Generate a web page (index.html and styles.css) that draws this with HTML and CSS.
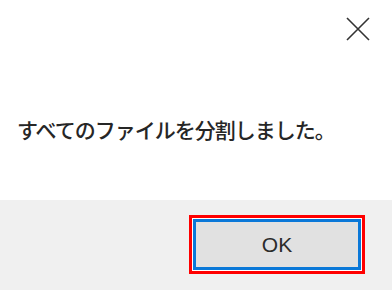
FILE: index.html
```html
<!DOCTYPE html>
<html lang="ja">
<head>
<meta charset="utf-8">
<link rel="stylesheet" href="styles.css">
</head>
<body>
<div class="dialog">
  <div class="main">
    <div class="titlebar">
      <button class="close" aria-label="閉じる">
        <svg width="24" height="24" viewBox="0 0 24 24"><path d="M1 1 L23 23 M23 1 L1 23" stroke="#333" stroke-width="1.6" fill="none"/></svg>
      </button>
    </div>
    <p class="message">すべてのファイルを分割しました。</p>
  </div>
  <div class="footer">
    <div class="highlight">
      <button class="ok">OK</button>
    </div>
  </div>
</div>
</body>
</html>
```
FILE: styles.css
```css
html, body {
  margin: 0;
  padding: 0;
  background: #ffffff;
}
.dialog {
  width: 392px;
  height: 290px;
  display: flex;
  flex-direction: column;
  font-family: "Noto Sans CJK JP", "Noto Sans", sans-serif;
}
.main {
  height: 200px;
  background: #ffffff;
  display: flex;
  flex-direction: column;
}
.titlebar {
  display: flex;
  justify-content: flex-end;
  padding: 17px 22px 0 0;
}
.close {
  width: 24px;
  height: 24px;
  padding: 0;
  border: 0;
  background: transparent;
  display: flex;
}
.message {
  margin: 73px 0 0 17px;
  font-size: 21px;
  font-weight: 500;
  line-height: 30px;
  color: #262626;
  letter-spacing: -1px;
}
.footer {
  flex: 1;
  background: #f0f0f0;
  display: flex;
  justify-content: flex-end;
  align-items: flex-start;
  padding: 15px 27px 0 0;
}
.highlight {
  border: 3px solid #ff0000;
  padding: 1px;
  background: #ffffff;
}
.ok {
  display: block;
  width: 168px;
  height: 51px;
  box-sizing: border-box;
  border: 3px solid #0a78d8;
  background: #e1e1e1;
  font-family: "Liberation Sans", Arial, sans-serif;
  font-size: 21px;
  color: #2b2b2b;
  padding: 0;
}
```
